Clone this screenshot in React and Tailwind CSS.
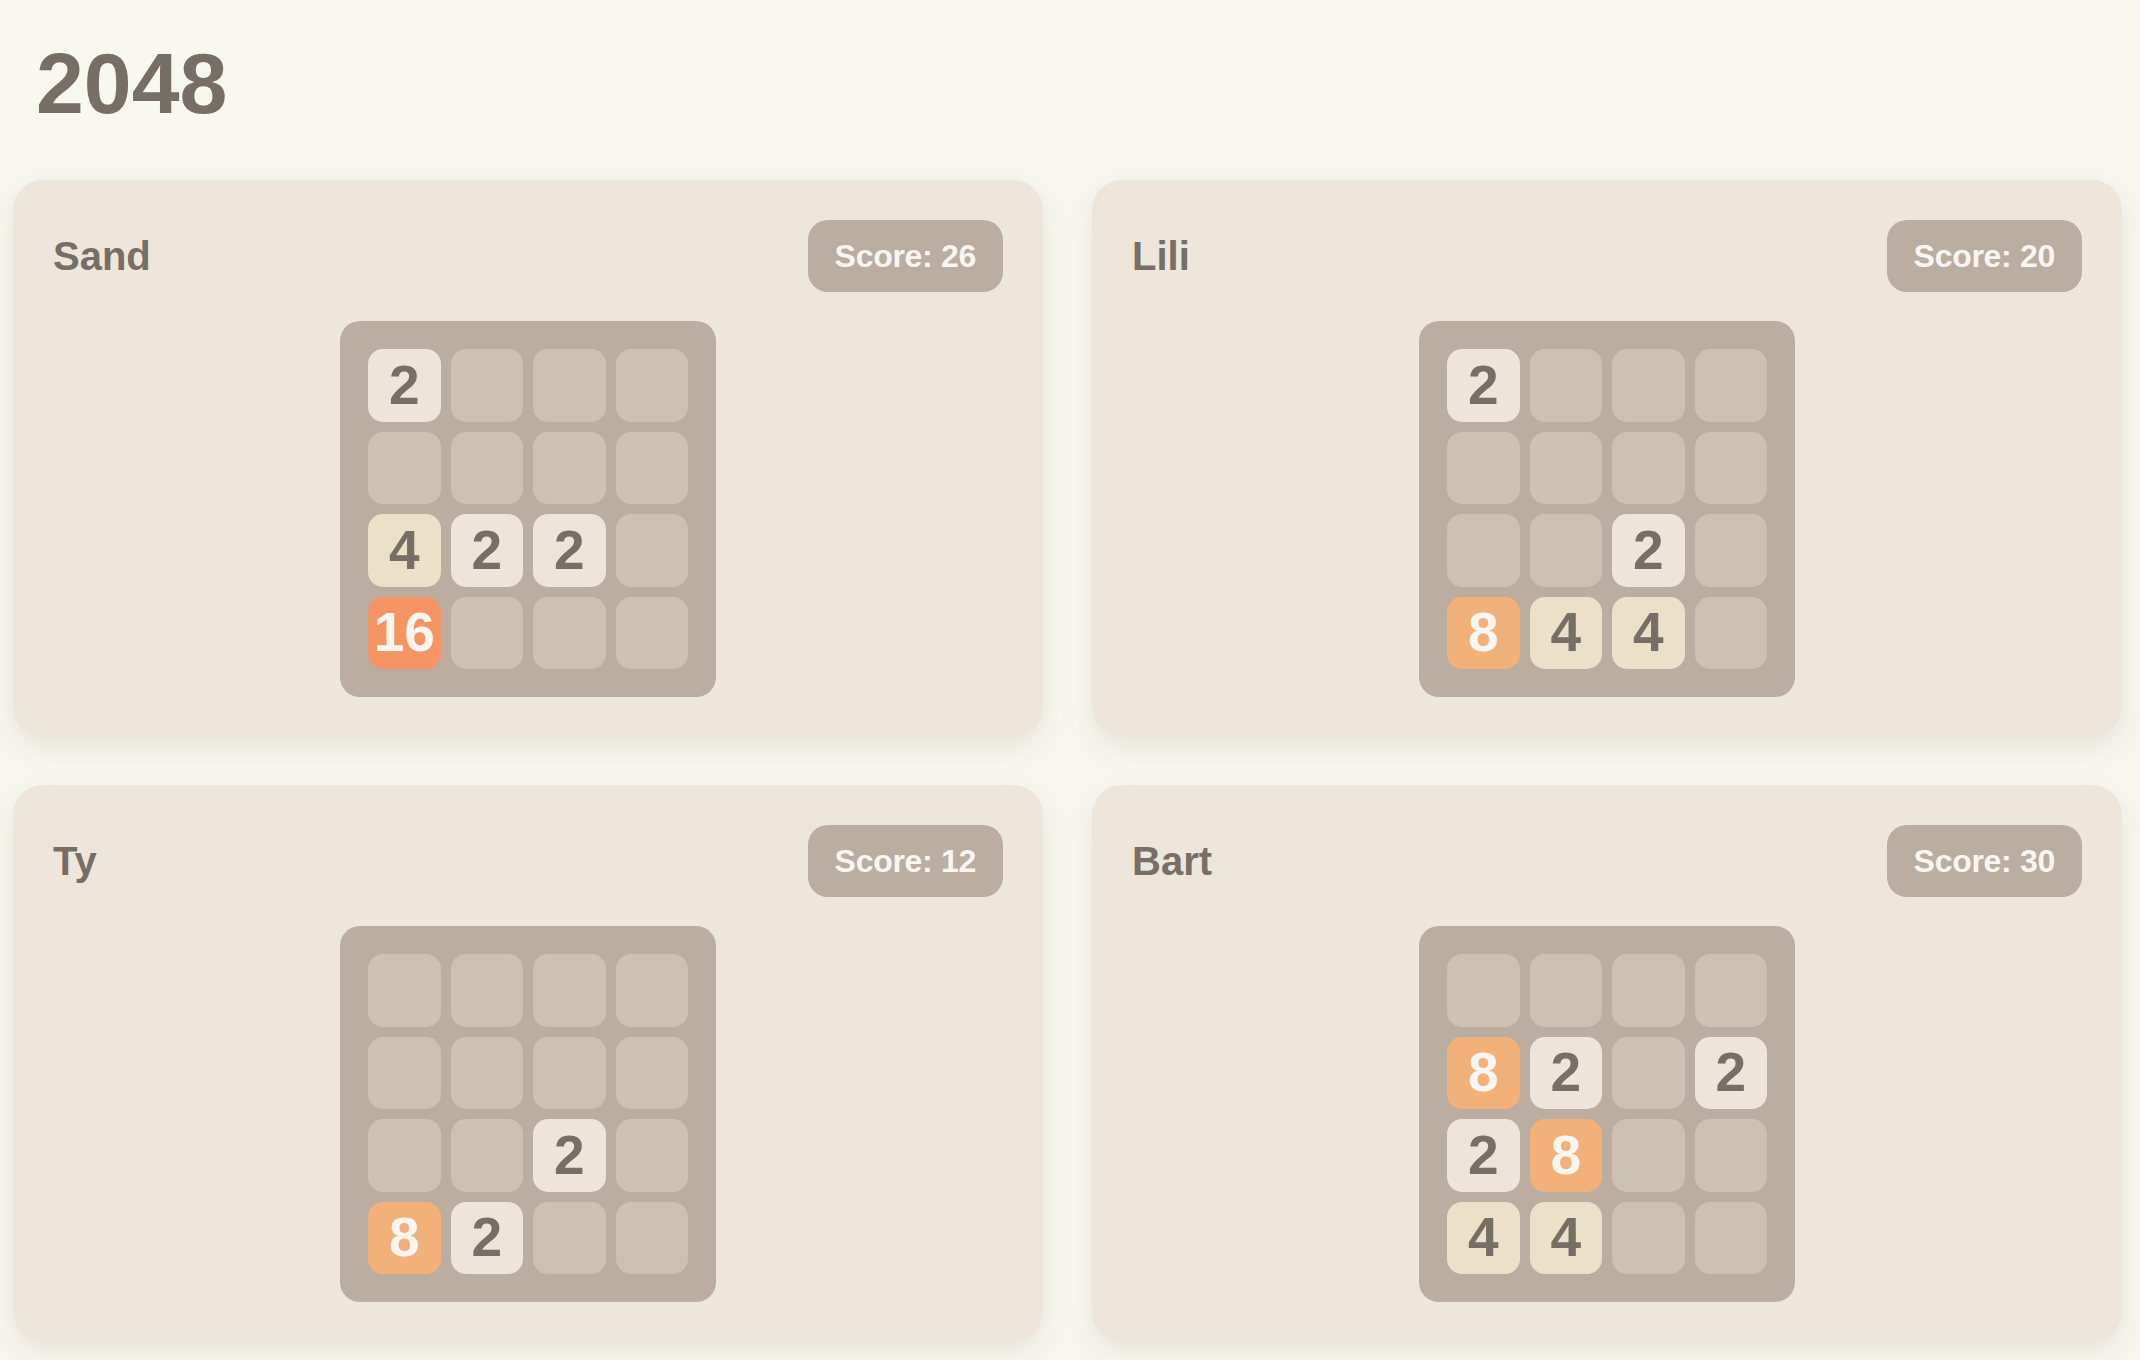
const players = [
  {
    name: 'Sand',
    score: 26,
    board: [
      [2, 0, 0, 0],
      [0, 0, 0, 0],
      [4, 2, 2, 0],
      [16, 0, 0, 0],
    ],
  },
  {
    name: 'Lili',
    score: 20,
    board: [
      [2, 0, 0, 0],
      [0, 0, 0, 0],
      [0, 0, 2, 0],
      [8, 4, 4, 0],
    ],
  },
  {
    name: 'Ty',
    score: 12,
    board: [
      [0, 0, 0, 0],
      [0, 0, 0, 0],
      [0, 0, 2, 0],
      [8, 2, 0, 0],
    ],
  },
  {
    name: 'Bart',
    score: 30,
    board: [
      [0, 0, 0, 0],
      [8, 2, 0, 2],
      [2, 8, 0, 0],
      [4, 4, 0, 0],
    ],
  },
];

// classic tile palette
const tileStyles = {
  0: 'bg-[#cdc1b4]',
  2: 'bg-[#eee4da] text-[#776e65]',
  4: 'bg-[#ede0c8] text-[#776e65]',
  8: 'bg-[#f2b179] text-[#f9f6f2]',
  16: 'bg-[#f59563] text-[#f9f6f2]',
  32: 'bg-[#f67c5f] text-[#f9f6f2]',
  64: 'bg-[#f65e3b] text-[#f9f6f2]',
};

const Tile = ({ value }) => (
  <div
    className={`flex aspect-square items-center justify-center rounded-[15px] text-[55px] font-bold leading-none ${tileStyles[value]}`}
  >
    {value > 0 ? value : ''}
  </div>
);

const Board = ({ board }) => (
  <div className="mx-auto grid w-[376px] grid-cols-4 gap-[10px] rounded-[20px] bg-[#bbada0] p-[28px]">
    {board.flat().map((value, i) => (
      <Tile key={i} value={value} />
    ))}
  </div>
);

const PlayerCard = ({ player }) => (
  <div className="rounded-[30px] bg-[#eee6db] p-10 shadow-[0_12px_32px_rgba(120,100,70,0.13)]">
    <div className="flex items-center justify-between">
      <h2 className="text-[40px] font-bold leading-none text-[#776e65]">{player.name}</h2>
      <div className="flex h-[72px] items-center rounded-[20px] bg-[#bbada0] px-[27px] text-[32px] font-bold leading-none tracking-[-0.3px] text-[#f9f6f2]">
        Score: {player.score}
      </div>
    </div>
    <div className="mt-[29px]">
      <Board board={player.board} />
    </div>
  </div>
);

export default function App() {
  return (
    <div
      className="min-h-screen bg-[#f8f7f0] pb-[12px]"
      style={{ fontFamily: '"Liberation Sans", Arial, Helvetica, sans-serif' }}
    >
      <h1 className="pl-[36px] pt-[40px] text-[86px] font-bold leading-none text-[#776e65]">2048</h1>
      <div className="mt-[54px] grid grid-cols-2 gap-x-[49px] gap-y-[48px] pl-[13px] pr-[18px]">
        {players.map((player) => (
          <PlayerCard key={player.name} player={player} />
        ))}
      </div>
    </div>
  );
}
